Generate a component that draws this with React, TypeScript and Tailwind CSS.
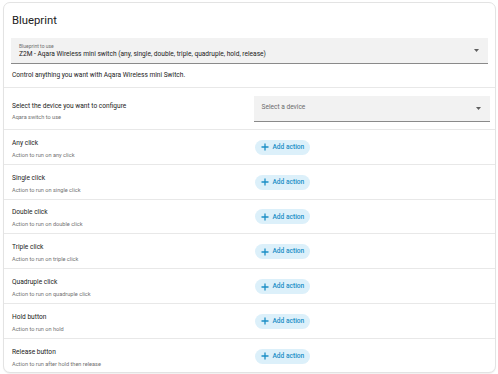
import React from "react";

const rows = [
  ["Any click", "Action to run on any click"],
  ["Single click", "Action to run on single click"],
  ["Double click", "Action to run on double click"],
  ["Triple click", "Action to run on triple click"],
  ["Quadruple click", "Action to run on quadruple click"],
  ["Hold button", "Action to run on hold"],
  ["Release button", "Action to run after hold then release"],
];

function Arrow() {
  return (
    <svg width="5" height="3" viewBox="0 0 5 3" className="shrink-0">
      <path d="M0 0 L5 0 L2.5 3 Z" fill="#5f5f5f" />
    </svg>
  );
}

function AddButton() {
  return (
    <div className="flex h-[15px] w-[55px] items-center rounded-full bg-[#dcf0fa] pl-[6px] text-[#1b8ec6]">
      <svg width="8" height="8" viewBox="0 0 8 8" className="shrink-0">
        <path d="M4 0.5 V7.5 M0.5 4 H7.5" stroke="#1b8ec6" strokeWidth="1.3" />
      </svg>
      <span className="ml-[3.5px] text-[6.6px] font-medium leading-none">Add action</span>
    </div>
  );
}

export default function App() {
  return (
    <div
      className="h-[374px] w-[498px] bg-white pl-[3px] pr-[2px] pt-[2px]"
      style={{ fontFamily: "Roboto, 'Liberation Sans', sans-serif" }}
    >
      <div className="h-[371px] overflow-hidden rounded-[7px] border border-[#e3e3e3] bg-white shadow-[0_1px_1px_rgba(0,0,0,0.06)]">
        <div className="px-[7px]">
          <div className="flex h-[35px] items-center pl-[1px] pt-[2px] text-[11.3px] text-[#212121]">Blueprint</div>
          <div className="flex h-[26px] items-center justify-between border-b border-[#8a8a8a] bg-[#f2f2f2] pl-[8px] pr-[9px]">
            <div className="flex flex-col">
              <span className="text-[5px] leading-[7px] text-[#6f6f6f]">Blueprint to use</span>
              <span className="text-[6.6px] leading-[9px] text-[#212121]">
                Z2M - Aqara Wireless mini switch (any, single, double, triple, quadruple, hold, release)
              </span>
            </div>
            <Arrow />
          </div>
          <div className="flex h-[23px] items-center pl-[1px] text-[6.6px] text-[#212121]">
            Control anything you want with Aqara Wireless mini Switch.
          </div>
        </div>
        <div className="flex h-[42px] items-center border-t border-[#e8e8e8] pl-[8px] pr-[5px]">
          <div className="flex w-[243px] flex-col gap-[2px] pt-[5px]">
            <span className="text-[6.6px] leading-[9px] text-[#212121]">Select the device you want to configure</span>
            <span className="text-[5.6px] leading-[8px] text-[#727272]">Aqara switch to use</span>
          </div>
          <div className="flex h-[26px] w-[236px] items-center justify-between border-b border-[#8a8a8a] bg-[#f2f2f2] pl-[7px] pr-[9px]">
            <span className="text-[6.6px] text-[#6b6b6b]">Select a device</span>
            <Arrow />
          </div>
        </div>
        {rows.map(([t, s]) => (
          <div key={t} className="flex h-[34.8px] items-center border-t border-[#e8e8e8] pl-[8px]">
            <div className="flex w-[243px] flex-col gap-[2px] pt-[4px]">
              <span className="text-[6.6px] leading-[10px] text-[#212121]">{t}</span>
              <span className="text-[5.6px] leading-[10px] text-[#727272]">{s}</span>
            </div>
            <div className="pt-[1px]">
              <AddButton />
            </div>
          </div>
        ))}
      </div>
    </div>
  );
}
